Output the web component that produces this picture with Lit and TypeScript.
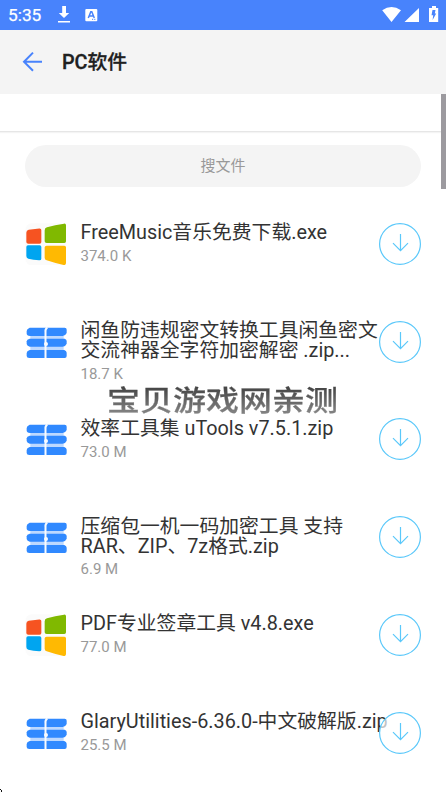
import { LitElement, html, css, svg } from "lit";
import { customElement, property } from "lit/decorators.js";

type Kind = "exe" | "zip";
interface FileEntry { kind: Kind; lines: string[]; size: string; }

const FILES: FileEntry[] = [
  { kind: "exe", lines: ["FreeMusic音乐免费下载.exe"], size: "374.0 K" },
  { kind: "zip", lines: ["闲鱼防违规密文转换工具闲鱼密文", "交流神器全字符加密解密 .zip..."], size: "18.7 K" },
  { kind: "zip", lines: ["效率工具集 uTools v7.5.1.zip"], size: "73.0 M" },
  { kind: "zip", lines: ["压缩包一机一码加密工具 支持", "RAR、ZIP、7z格式.zip"], size: "6.9 M" },
  { kind: "exe", lines: ["PDF专业签章工具 v4.8.exe"], size: "77.0 M" },
  { kind: "zip", lines: ["GlaryUtilities-6.36.0-中文破解版.zip"], size: "25.5 M" },
];

const exeIcon = svg`
  <rect x="1" y="1" width="122" height="126" rx="20" fill="#fbfbfb"/>
  <path fill="#f65321" d="M11 20L43 16.5Q49 16 49 22V57Q49 62 44 62H10Q4 62 4 57V29Q4 21 11 20Z"/>
  <path fill="#80b900" d="M66 13Q90 5 117 2Q123 1 123 7V55Q123 60 118 60H65Q59 60 59 55V22Q59 15 66 13Z"/>
  <path fill="#00a5f0" d="M9 67H44Q49 67 49 72V107Q49 112 43 112Q24 111 10 107Q4 105 4 99V72Q4 67 9 67Z"/>
  <path fill="#ffb902" d="M65 68H118Q123 68 123 73V120Q123 127 116 126Q91 121 65 112Q59 110 59 104V73Q59 68 65 68Z"/>`;

const zipIcon = svg`
  <g transform="translate(0 -1)">
  <path fill="#bcd8ff" d="M16 44H116V57H16ZM16 76H116V91H16Z"/>
  <g fill="#3089ff">
    <path d="M14 21H119Q125 21 125 27V37Q121 46 113 46H15Q5 46 5 38V31Q5 25 14 21Z"/>
    <path d="M14 54H119Q125 56 125 61V69Q121 78 113 78H14Q5 75 5 70V62Q5 56 14 54Z"/>
    <path d="M14 88H118Q125 91 125 96V106Q125 112 119 112H13Q5 112 5 106V97Q5 91 14 88Z"/>
  </g>
  <path d="M67 20Q60 25 61.5 35V113" fill="none" stroke="#f8fbff" stroke-width="6"/>
  <circle cx="63" cy="70" r="6" fill="#f8fbff"/>
  </g>`;

@customElement("file-row")
class FileRow extends LitElement {
  @property({ attribute: false }) file!: FileEntry;
  static styles = css`
    :host { display: flex; height: 97.8px; align-items: flex-start; }
    .icon { width: 42px; height: 42px; flex: none; margin-right: 13.5px; }
    .info { width: 298.5px; flex: none; white-space: nowrap; padding-top: .4px; }
    .name { font-size: 19.82px; line-height: 20px; color: #333; }
    .size { font-size: 15px; line-height: 18px; margin-top: 3.8px; color: #999; }
    .get { width: 42px; height: 42px; flex: none; position: relative; }
  `;
  render() {
    return html`
      <svg class="icon" viewBox="0 0 126 126">${this.file.kind === "exe" ? exeIcon : zipIcon}</svg>
      <div class="info">
        ${this.file.lines.map((l) => html`<div class="name">${l}</div>`)}
        <div class="size">${this.file.size}</div>
      </div>
      <svg class="get" viewBox="0 0 42 42" fill="none" stroke="#5ac8fa" stroke-width="1.2">
        <circle cx="21" cy="21" r="20.4" fill="#fff" fill-opacity=".7"/>
        <path d="M21.5 11V28M14 20.2L21.5 27.7L29 20.2"/>
      </svg>`;
  }
}

@customElement("app-root")
class AppRoot extends LitElement {
  static styles = css`
    :host { display: flex; flex-direction: column; position: relative; width: 446px; height: 792px; overflow: hidden;
      background: #fff; font-family: Roboto, "Noto Sans CJK SC", sans-serif; }
    .status { height: 30px; flex: none; box-sizing: border-box; display: flex; align-items: center;
      padding: 0 7px 0 8px; background: #4883fc; color: #fff; }
    .time { width: 49px; font-size: 17.3px; line-height: 30px; font-weight: 400; -webkit-text-stroke: .25px #fff; }
    .spacer { flex: 1; }
    .status svg { flex: none; }
    .bar { height: 64px; flex: none; display: flex; align-items: center; padding-left: 22px; background: #f4f4f4; }
    .bar h1 { margin: 2px 0 0 19px; font-size: 19.8px; line-height: 28px; font-weight: 500; color: #202020;
      -webkit-text-stroke: .3px #202020; }
    .tabs { height: 37px; flex: none; border-bottom: 1px solid #e6e6e6; box-shadow: 0 1px 1px #f4f4f4; }
    .search { height: 42px; flex: none; margin: 13px 25px 0; border-radius: 21px; background: #f4f4f4;
      color: #999; font-size: 15px; line-height: 42px; text-align: center; }
    .list { margin: 35.9px 25px 0; }
    .scroll { position: absolute; right: 0; top: 94px; width: 5px; height: 95px; background: #9c9a9f; }
    .mark { position: absolute; left: 107px; top: 376px; font: 500 33px/46px "Noto Sans CJK SC", sans-serif;
      white-space: nowrap; color: transparent; background: linear-gradient(#444 20%, #808080 82%);
      background-clip: text; -webkit-background-clip: text; transform: scaleY(.87); -webkit-text-stroke: .3px transparent; }
    .speck { position: absolute; left: 0; bottom: 0; width: 2px; height: 3px; }
  `;
  render() {
    return html`
      <div class="status">
        <span class="time">5:35</span>
        <svg width="14" height="18" viewBox="0 0 14 18" fill="#fff"><path d="M5.2 0H9V7H12.2L7 12L1.8 7H5.2ZM1 15H13V16.6H1Z"/></svg>
        <svg width="28" height="14" viewBox="0 0 28 14"><rect x="14.3" y="1" width="12" height="12.2" rx="1" fill="#fff"/>
          <path d="M17.3 10L19.8 3.8H20.8L23.3 10M18.2 8H22.3" fill="none" stroke="#4883fc" stroke-width="1.5"/><path d="M21 11.3H22.2M23.2 11.3H24.4" stroke="#4883fc"/></svg>
        <span class="spacer"></span>
        <svg width="58" height="18" viewBox="0 0 58 18" fill="#fff">
          <path d="M1.2 4.2Q10.5-2 20 4.2L10.5 16ZM23.5 16L38 2V16ZM48 2H51V0H55V2H57.2V16H48Z"/>
          <path d="M51.5 4H54.5L53.8 7.5H55.2L51.6 14L52.2 9.2H50.5Z" fill="#4883fc"/>
        </svg>
      </div>
      <div class="bar">
        <svg width="21" height="22" viewBox="0 0 21 22" fill="none" stroke="#4883fc" stroke-width="2"><path d="M20 10.7H2M11 1.6L2 10.7L11 19.8"/></svg>
        <h1>PC软件</h1>
      </div>
      <div class="tabs"></div>
      <div class="search">搜文件</div>
      <div class="list">${FILES.map((f) => html`<file-row .file=${f}></file-row>`)}</div>
      <div class="scroll"></div>
      <div class="mark">宝贝游戏网亲测</div>
      <svg class="speck" viewBox="0 0 2 3"><path d="M0 0H1V1H2V3H1V1H0Z" fill="#111"/></svg>`;
  }
}
